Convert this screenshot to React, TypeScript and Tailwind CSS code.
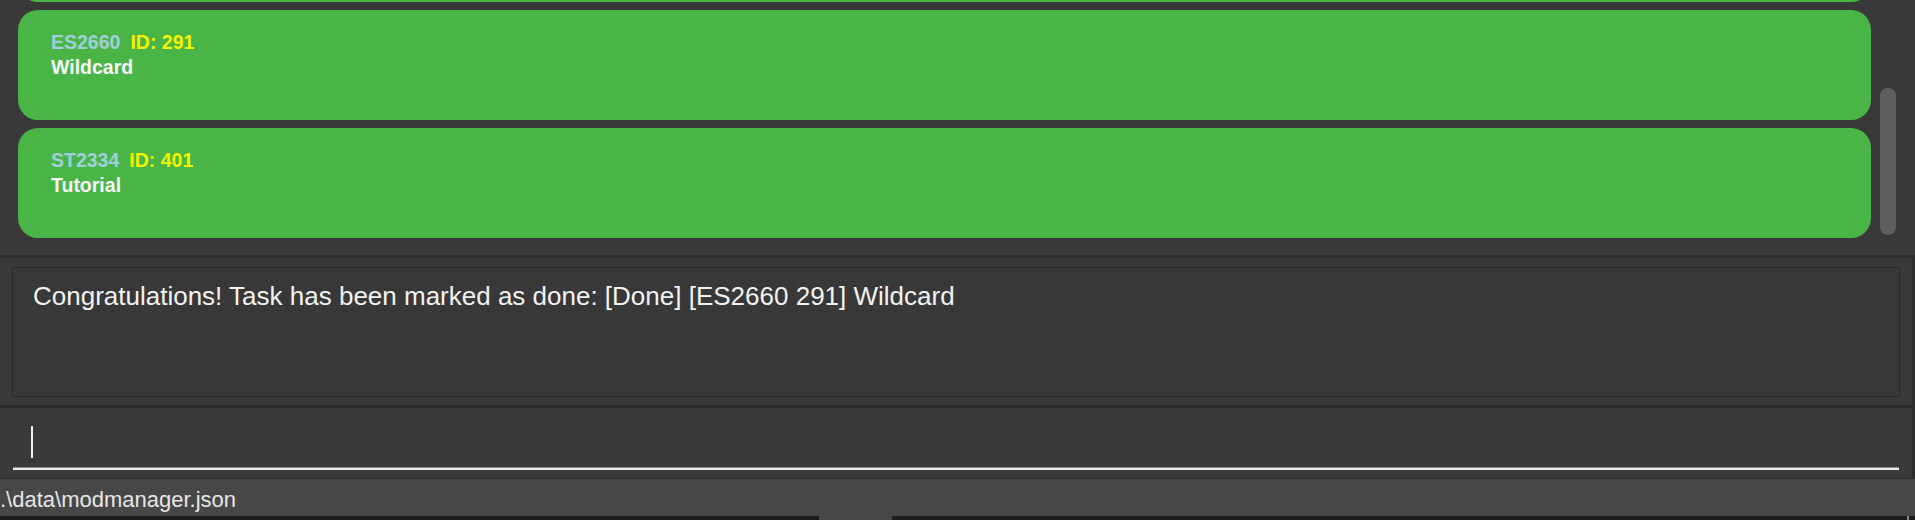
import React from 'react';

type Task = { code: string; id: number; title: string };

const tasks: Task[] = [
  { code: 'ES2660', id: 291, title: 'Wildcard' },
  { code: 'ST2334', id: 401, title: 'Tutorial' },
];

const TaskCard: React.FC<{ task: Task }> = ({ task }) => (
  <div className="h-[110px] shrink-0 rounded-[20px] bg-[#4ab547] pl-[33px] pt-[20px] font-['Liberation_Sans',Arial,sans-serif] text-[19.5px] font-bold leading-[25px]">
    <div className="flex gap-[10px]">
      <span className="text-[#a2cfd9]">{task.code}</span>
      <span className="text-[#f4f400]">ID: {task.id}</span>
    </div>
    <div className="text-[#f6f6f6]">{task.title}</div>
  </div>
);

export default function App() {
  return (
    <div className="flex h-[520px] w-[1915px] flex-col overflow-hidden bg-[#393939] font-['Liberation_Sans',Arial,sans-serif]">
      {/* task list, scrolled so only the bottom edge of the previous card shows */}
      <div className="flex h-[255px] shrink-0 overflow-hidden pl-[18px]">
        <div className="flex flex-1 flex-col gap-[8px]">
          <div className="mt-[-108px] h-[110px] shrink-0 rounded-[20px] bg-[#4ab547]" />
          {tasks.map((t) => (
            <TaskCard key={t.code} task={t} />
          ))}
        </div>
        <div className="ml-[9px] mr-[19px] w-[16px]">
          <div className="mt-[88px] h-[147px] rounded-full bg-[#5f5f5f]" />
        </div>
      </div>

      {/* result display */}
      <div className="h-[150px] shrink-0 border-t-[3px] border-r-[3px] border-[#2c2c2c] pt-[9px]">
        <div className="mx-[12px] h-[130px] border border-[#2a2a2a] bg-[#383838] pl-[20px] pt-[9px] text-[26px] text-[#f2f2f2]">
          Congratulations! Task has been marked as done: [Done] [ES2660 291] Wildcard
        </div>
      </div>

      {/* command box */}
      <div className="h-[74px] shrink-0 border-t-[3px] border-r-[3px] border-b border-[#2c2c2c]">
        <div className="ml-[31px] mt-[18px] h-[32px] w-[1.5px] bg-[#f0f0f0]" />
        <div className="mx-[13px] mt-[9px] h-[3px] border-t border-[#8c8c8c] bg-[#ececec]" />
      </div>

      {/* status bar */}
      <div className="flex h-[37px] shrink-0 items-center bg-[#474747] pt-[4px] text-[22px] text-[#e6e6e6]">
        .\data\modmanager.json
      </div>

      {/* bottom scroll strip */}
      <div className="flex h-[4px] shrink-0 bg-[#1d1d1d]">
        <div className="ml-[819px] w-[73px] bg-[#474747]" />
        <div className="ml-[1015px] w-[2px] bg-[#8a8a8a]" />
      </div>
    </div>
  );
}
